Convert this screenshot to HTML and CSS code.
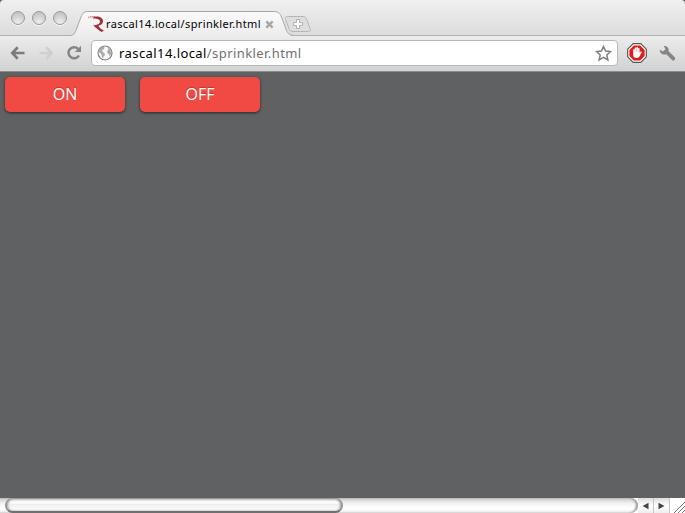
FILE: index.html
```html
<!DOCTYPE html>
<html lang="en">
<head>
<meta charset="utf-8">
<title>rascal14.local/sprinkler.html</title>
<link rel="stylesheet" href="styles.css">
</head>
<body>
<div class="window">
  <header class="tabstrip">
    <div class="lights"><i></i><i></i><i></i></div>
    <div class="tab">
      <svg class="tab-shape" width="224" height="26" viewBox="0 0 224 26">
        <defs><linearGradient id="tabfill" x1="0" y1="0" x2="0" y2="1"><stop offset="0" stop-color="#fafafa"/><stop offset="1" stop-color="#ececec"/></linearGradient></defs>
        <path d="M0 24.5C4 24.5 5 22 6.500 18L11 6C12.500 2 14.500 .5 18 .5H203C208 .5 210 2 211.500 6L216 18C217.500 22 219 24.500 224 24.500V26H0Z" fill="url(#tabfill)"/>
        <path d="M0 24.5C4 24.5 5 22 6.500 18L11 6C12.500 2 14.500 .5 18 .5H203C208 .5 210 2 211.500 6L216 18C217.500 22 219 24.500 224 24.500" fill="none" stroke="#a6a6a6"/>
      </svg>
      <svg class="favicon" width="16" height="16" viewBox="0 0 16 16">
        <path d="M0 1.600Q3 .3 7 .9" stroke="#cf8f94" stroke-width="1.400" fill="none" stroke-dasharray="1.600 .5"/>
        <path d="M5.500 .9C11 -.2 15 1.800 15 5.300C15 8.200 12.500 9.300 10.500 9.800C11.500 12 13 13.500 16 14.500L13.500 16C11 14.500 8.500 12.200 6 10.300L5.200 9.300C9.500 9 12 7.800 12 5.500C12 3.200 9 2.300 5 2.500Z" fill="#a32f3a"/>
      </svg>
      <span class="tab-title">rascal14.local/sprinkler.html</span>
      <svg class="close" width="9" height="9" viewBox="0 0 9 9"><path d="M1.300 1.300L7.700 7.700M7.700 1.300L1.300 7.700" stroke="#a6a6a6" stroke-width="2.400"/></svg>
    </div>
    <svg class="new-tab" width="28" height="17" viewBox="0 0 28 17">
      <path d="M3.500 .5H19C21 .5 22 1.500 22.700 3.500L26 12.500C26.800 14.800 26.300 15.500 24.500 15.500H9C6.700 15.500 5.800 14.500 5 12.500L1.500 3.500C.7 1.500 1.500 .5 3.500 .5Z" fill="#dedede" stroke="#b6b6b6"/>
      <path d="M12.500 3.500H15.500V6.500H18.500V9.500H15.500V12.500H12.500V9.500H9.500V6.500H12.500Z" fill="#fafafa" stroke="#b0b0b0"/>
    </svg>
  </header>
  <nav class="toolbar">
    <svg class="back" width="16" height="14" viewBox="0 0 16 14"><path d="M7.700 1.300L2.300 7L7.700 12.700M2.500 7H14.500" fill="none" stroke="#7c7c7c" stroke-width="2.700"/></svg>
    <svg class="forward" width="16" height="14" viewBox="0 0 16 14"><path d="M8.300 1.300L13.700 7L8.300 12.700M13.500 7H1.500" fill="none" stroke="#cfcfcf" stroke-width="2.700"/></svg>
    <svg class="reload" width="16" height="16" viewBox="0 0 16 16"><path d="M12.100 3.800A5.600 5.600 0 1 0 13 10.500" fill="none" stroke="#858585" stroke-width="2.500"/><path d="M15 .8V7H8.800Z" fill="#858585"/></svg>
    <div class="omnibox">
      <svg class="globe" width="16" height="16" viewBox="0 0 16 16"><circle cx="8" cy="8" r="7" fill="#f8f8f8" stroke="#808080" stroke-width="1.200"/><path d="M2 4.500L5 1.800L7.500 2L7 4L5 5.200L5.800 7L7.500 8.300L8 10L6.500 11.500L6.200 14L4.700 11.500L4.500 9L2.200 7.500ZM10.500 2.300L13.500 5L14.200 8.300L12.600 11L11.500 9L10.200 7.500L10.400 5.500L11.500 4.500Z" fill="#aaa"/></svg>
      <span class="url">rascal14.local<span>/sprinkler.html</span></span>
      <svg class="star" width="17" height="17" viewBox="0 0 17 17"><path d="M8.500 1.500L10.600 6.100L15.500 6.600L11.800 9.900L12.900 15L8.500 12.400L4.100 15L5.200 9.900L1.500 6.600L6.400 6.100Z" fill="#fff" stroke="#7f7f7f" stroke-width="1.500"/></svg>
    </div>
    <svg class="adblock" width="20" height="20" viewBox="0 0 20 20">
      <path d="M6.200 .7H13.800L19.300 6.200V13.800L13.800 19.300H6.200L.7 13.800V6.200Z" fill="#fff" stroke="#555" stroke-width="1.200"/>
      <path d="M6.900 2.400H13.100L17.600 6.900V13.100L13.100 17.600H6.900L2.400 13.100V6.900Z" fill="#e01b18"/>
      <path d="M6.200 6.500Q7 5.500 7.700 6.500V5Q8.500 4 9.300 5V4.300Q10.200 3.300 11 4.300V5.300Q12 4.500 12.600 5.500V9.500L14 8.300Q15.200 8.500 14.500 9.700L12.500 13.500Q11.500 15 9.500 15Q6.200 15 6.200 11.800Z" fill="#fff"/><path d="M7.900 6V9M9.500 5V9M11.200 5.500V9" stroke="#e99" stroke-width=".5"/>
    </svg>
    <svg class="wrench" width="17" height="17" viewBox="0 0 17 17"><path d="M.8 4.700L4 6.500L6.500 4.300L4.800 1C8 .5 10.200 3 9.600 6.300L16 12.500Q16.500 14 15.500 15Q14.300 16 13 15L7.300 9.200C4 10.200 .5 8.500 .8 4.700Z" fill="#858585"/></svg>
  </nav>
  <main class="page">
    <button class="btn">ON</button>
    <button class="btn">OFF</button>
  </main>
  <footer class="scroll">
    <div class="track"><div class="thumb"></div></div>
    <div class="arrow"><svg width="7" height="8" viewBox="0 0 7 8"><path d="M6.500 .7V7.300L.5 4Z" fill="#454545"/></svg></div>
    <div class="arrow"><svg width="7" height="8" viewBox="0 0 7 8"><path d="M.5 .7V7.300L6.500 4Z" fill="#454545"/></svg></div>
    <svg class="grip" width="15" height="15" viewBox="0 0 15 15"><path d="M4 15L15 4M8 15L15 8M12 15L15 12" stroke="#777"/></svg>
  </footer>
</div>
</body>
</html>
```
FILE: styles.css
```css
* { box-sizing: border-box; }
body { margin: 0; background: #606162; }
svg { display: block; flex: none; }
.window { display: flex; flex-direction: column; width: 685px; height: 513px; overflow: hidden; border-radius: 4px 4px 0 0; font-family: "Noto Sans", sans-serif; }
.tabstrip { display: flex; height: 36px; flex: none; padding-left: 11px; background: linear-gradient(#f0f0f0, #dcdcdc); border-bottom: 1px solid #b0b0b0; }
.lights { display: flex; gap: 7px; width: 59px; padding-top: 11px; flex: none; }
.lights i { width: 14px; height: 14px; border: 1px solid #999; border-radius: 50%; background: radial-gradient(circle at 50% 85%, #eee, #d0d0d0 55%, #bbb); box-shadow: 0 1px 0 #f8f8f8; }
.tab { position: relative; display: flex; width: 224px; height: 26px; margin-top: 11px; padding-left: 18px; flex: none; }
.tab-shape { position: absolute; left: 0; top: 0; }
.favicon { position: relative; margin-top: 5px; }
.tab-title { position: relative; width: 157px; margin-left: 2px; font: 400 11px/26px "Noto Sans", sans-serif; letter-spacing: .37px; color: #000; white-space: nowrap; }
.close { position: relative; margin: 9px 0 0 2px; }
.new-tab { margin: 16px 0 0 -10px; }
.toolbar { display: flex; align-items: center; height: 36px; flex: none; padding: 0 0 1px 10px; background: linear-gradient(#ececec, #d2d2d2); border-bottom: 1px solid #8c8d8d; }
.forward { margin-left: 12px; }
.reload { margin-left: 12px; }
.omnibox { display: flex; align-items: center; width: 527px; height: 26px; margin-left: 9px; padding: 0 5px; border: 1px solid #b8b8b8; border-radius: 4px; background: #fff; }
.url { margin-left: 6px; flex: 1; font: 400 13px/24px "Noto Sans", sans-serif; letter-spacing: .42px; color: #000; }
.url span { color: #707070; }
.adblock { margin-left: 9px; }
.wrench { margin-left: 12px; }
.page { display: flex; flex: 1; align-items: flex-start; gap: 15px; padding: 5px; background: #606162; }
.btn { width: 120px; height: 35px; padding: 0; border: 0; border-radius: 5px; background: #f04a43; box-shadow: 0 1px 3px rgba(0, 0, 0, .6); font: 16px/35px "Open Sans", sans-serif; color: #fff; text-shadow: 0 -1px 1px rgba(0, 0, 0, .25); }
.scroll { display: flex; height: 15px; flex: none; background: #fff; }
.track { width: 638px; padding-left: 5px; border-radius: 0 8px 8px 0; background: linear-gradient(#c9c9c9, #f2f2f2 35%, #fff 70%, #eee); box-shadow: inset -2px 0 2px #999; }
.thumb { width: 338px; height: 15px; border: solid #999; border-width: 1px 2px 2px; border-bottom-color: #707070; border-radius: 8px; background: linear-gradient(#ddd, #fff 30%, #eee 45%, #fff); box-shadow: inset 1px 0 2px #aaa, inset -1px 0 2px #aaa; }
.arrow { display: flex; align-items: center; justify-content: center; width: 16px; border-right: 1px solid #c5c5c5; background: linear-gradient(#ddd, #fff 50%, #eee); }
.grip { margin-left: auto; }
```
